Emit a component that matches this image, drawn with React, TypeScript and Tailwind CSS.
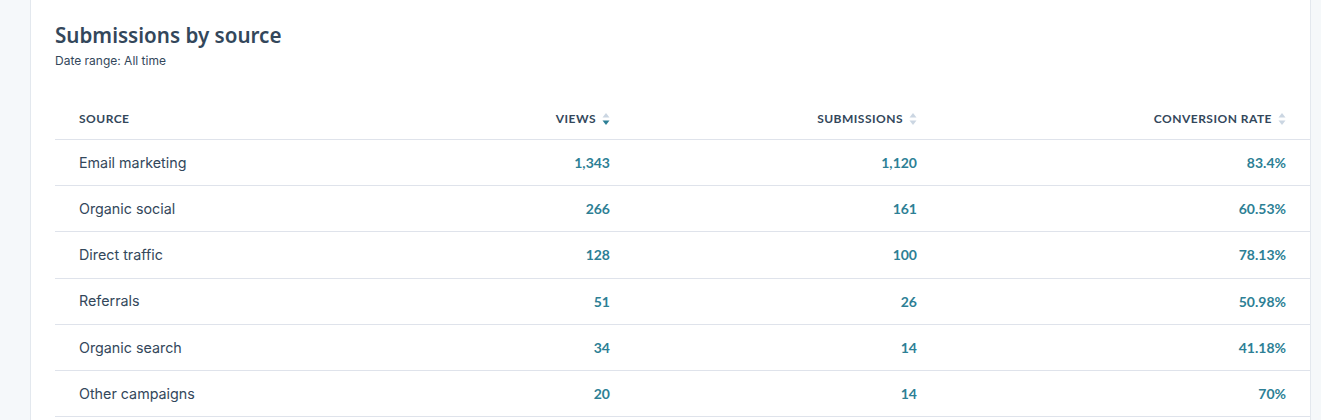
import React from "react";

const rows = [
  ["Email marketing", "1,343", "1,120", "83.4%"],
  ["Organic social", "266", "161", "60.53%"],
  ["Direct traffic", "128", "100", "78.13%"],
  ["Referrals", "51", "26", "50.98%"],
  ["Organic search", "34", "14", "41.18%"],
  ["Other campaigns", "20", "14", "70%"],
];

function SortIcon({ active }: { active?: boolean }) {
  return (
    <svg width="8" height="14" viewBox="0 0 8 14" className="ml-[6px] shrink-0">
      <path d="M4 1 L7.5 5.5 H0.5 Z" fill="#cbd6e2" />
      <path d="M4 13 L7.5 8.5 H0.5 Z" fill={active ? "#2d7f95" : "#cbd6e2"} />
    </svg>
  );
}

export default function App() {
  const grid = "grid grid-cols-[345px_234px_307px_1fr]";
  return (
    <div className="flex h-[420px] w-[1321px] overflow-hidden bg-[#f5f8fa] pl-[30px] pr-[10px]" style={{ fontFamily: "Inter, 'Noto Sans', sans-serif" }}>
      <div className="flex-1 border-x border-[#e3e8ee] bg-white pl-6">
        <h1 className="mt-[21px] text-[20.6px] leading-[28px] text-[#33475b]" style={{ fontFamily: "'Noto Sans', sans-serif", fontWeight: 600 }}>
          Submissions by source
        </h1>
        <div className="mt-1 text-[12px] leading-[16px] text-[#33475b]">Date range: All time</div>
        <div className="mt-[29px]">
          <div className={`${grid} h-[42px] items-center border-b border-[#dfe3eb] text-[12px] font-bold tracking-[0.04em] text-[#33475b]`} style={{ fontFamily: "Lato, sans-serif" }}>
            <div className="pl-6">SOURCE</div>
            <div className="flex items-center justify-end pr-6">VIEWS<SortIcon active /></div>
            <div className="flex items-center justify-end pr-6">SUBMISSIONS<SortIcon /></div>
            <div className="flex items-center justify-end pr-6">CONVERSION RATE<SortIcon /></div>
          </div>
          {rows.map((r) => (
            <div key={r[0]} className={`${grid} h-[46.2px] items-center border-b border-[#dfe3eb]`}>
              <div className="pl-6 text-[14.3px] text-[#33475b]">{r[0]}</div>
              {r.slice(1).map((v, i) => (
                <div key={i} className="pr-6 text-right text-[14px] font-bold text-[#2d7f95]" style={{ fontFamily: "Lato, sans-serif" }}>
                  {v}
                </div>
              ))}
            </div>
          ))}
        </div>
      </div>
    </div>
  );
}
